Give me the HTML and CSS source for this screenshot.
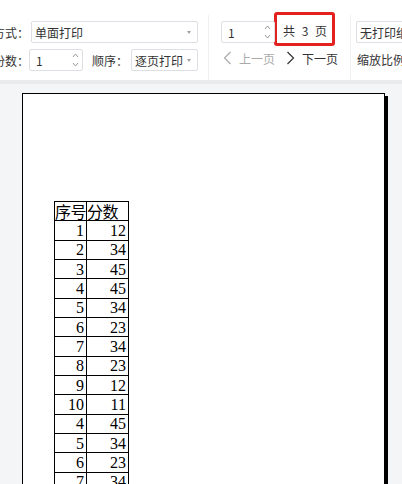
FILE: index.html
```html
<!DOCTYPE html>
<html lang="zh">
<head>
<meta charset="utf-8">
<title>打印预览</title>
<link rel="stylesheet" href="styles.css">
</head>
<body>
<div class="toolbar">
  <div class="group g1">
    <div class="row">
      <span class="label">打印方式：</span>
      <div class="field select wide"><span>单面打印</span><i class="caret"></i></div>
    </div>
    <div class="row">
      <span class="label">份数：</span>
      <div class="field spinner"><span>1</span>
        <svg class="arrows" width="7" height="16" viewBox="0 0 7 16"><path d="M1 5 L3.5 2 L6 5" fill="none" stroke="#9a9a9a" stroke-width="1"/><path d="M1 11 L3.5 14 L6 11" fill="none" stroke="#9a9a9a" stroke-width="1"/></svg>
      </div>
      <span class="label2">顺序：</span>
      <div class="field select narrow"><span>逐页打印</span><i class="caret"></i></div>
    </div>
  </div>
  <div class="divider"></div>
  <div class="group g2">
    <div class="row">
      <div class="field spinner"><span>1</span>
        <svg class="arrows" width="7" height="16" viewBox="0 0 7 16"><path d="M1 5 L3.5 2 L6 5" fill="none" stroke="#9a9a9a" stroke-width="1"/><path d="M1 11 L3.5 14 L6 11" fill="none" stroke="#9a9a9a" stroke-width="1"/></svg>
      </div>
      <span class="total">共 3 页</span>
    </div>
    <div class="row pager">
      <span class="nav disabled"><svg width="9" height="14" viewBox="0 0 9 14"><path d="M7.5 1 L1.5 7 L7.5 13" fill="none" stroke="currentColor" stroke-width="1.2"/></svg>上一页</span>
      <span class="nav"><svg width="9" height="14" viewBox="0 0 9 14"><path d="M1.5 1 L7.5 7 L1.5 13" fill="none" stroke="currentColor" stroke-width="1.2"/></svg>下一页</span>
    </div>
  </div>
  <div class="divider d2"></div>
  <div class="group g3">
    <div class="row">
      <div class="field cut"><span>无打印纸边距</span></div>
    </div>
    <div class="row">
      <span class="plain">缩放比例</span>
    </div>
  </div>
</div>
<div class="workspace">
  <div class="paper">
    <table class="sheet">
      <colgroup><col class="c1"><col class="c2"></colgroup>
      <thead><tr><th>序号</th><th>分数</th></tr></thead>
      <tbody>
        <tr><td>1</td><td>12</td></tr>
        <tr><td>2</td><td>34</td></tr>
        <tr><td>3</td><td>45</td></tr>
        <tr><td>4</td><td>45</td></tr>
        <tr><td>5</td><td>34</td></tr>
        <tr><td>6</td><td>23</td></tr>
        <tr><td>7</td><td>34</td></tr>
        <tr><td>8</td><td>23</td></tr>
        <tr><td>9</td><td>12</td></tr>
        <tr><td>10</td><td>11</td></tr>
        <tr><td>4</td><td>45</td></tr>
        <tr><td>5</td><td>34</td></tr>
        <tr><td>6</td><td>23</td></tr>
        <tr><td>7</td><td>34</td></tr>
        <tr><td>8</td><td>23</td></tr>
        <tr><td>9</td><td>12</td></tr>
      </tbody>
    </table>
  </div>
</div>
</body>
</html>
```

FILE: styles.css
```css
html, body {
  margin: 0;
  padding: 0;
}
body {
  width: 402px;
  height: 484px;
  overflow: hidden;
  background: #f4f5f7;
  font-family: "Noto Sans CJK SC", "Microsoft YaHei", sans-serif;
  font-size: 12px;
  color: #333;
}
.toolbar {
  display: flex;
  height: 80px;
  box-sizing: border-box;
  padding-top: 21px;
  background: #fff;
  white-space: nowrap;
  overflow: hidden;
}
.group {
  display: flex;
  flex-direction: column;
  gap: 6px;
  flex: none;
}
.row {
  display: flex;
  align-items: center;
  height: 22px;
}
.g1 {
  margin-left: -41px;
}
.label {
  width: 70px;
  text-align: right;
  flex: none;
}
.label2 {
  margin-left: 9px;
  width: 39px;
  flex: none;
}
.field {
  box-sizing: border-box;
  height: 22px;
  border: 1px solid #dcdfe3;
  border-radius: 2px;
  background: #fff;
  display: flex;
  align-items: center;
  padding-left: 3px;
  position: relative;
  flex: none;
}
.select.wide {
  width: 167px;
  margin-left: 2px;
}
.select.narrow {
  width: 67px;
}
.caret {
  position: absolute;
  right: 6px;
  top: 9px;
  width: 0;
  height: 0;
  border-left: 2.5px solid transparent;
  border-right: 2.5px solid transparent;
  border-top: 3px solid #a0a0a0;
}
.spinner {
  width: 54px;
  padding-left: 6px;
}
.arrows {
  position: absolute;
  right: 3px;
  top: 2px;
}
.divider {
  width: 1px;
  margin-left: 10px;
  margin-top: -6px;
  height: 65px;
  background: #f0f1f3;
  flex: none;
}
.g2 {
  padding-left: 12px;
}
.total {
  align-self: flex-start;
  box-sizing: border-box;
  margin-top: -9px;
  margin-left: -1px;
  height: 34px;
  width: 61px;
  border: 3px solid #e3211f;
  border-radius: 3px;
  display: flex;
  align-items: center;
  padding-top: 3px;
  padding-left: 6px;
  word-spacing: 4px;
}
.pager {
  margin-top: -2px;
}
.nav {
  display: flex;
  align-items: center;
  gap: 7px;
  color: #333;
}
.nav.disabled {
  color: #aaa;
  margin-left: 2px;
  margin-right: 11px;
}
.d2 {
  margin-left: 12px;
}
.g3 {
  padding-left: 5px;
}
.field.cut {
  width: 80px;
  padding-left: 3px;
}
.plain {
  padding-left: 1px;
  margin-top: -2px;
}
.workspace {
  border-top: 4px solid #eaebed;
  padding: 9px 0 0 22px;
}
.paper {
  box-sizing: border-box;
  width: 363px;
  height: 700px;
  background: #fff;
  border: 1px solid #000;
  box-shadow: 3px 3px 0 #000;
  padding: 107px 0 0 31px;
}
.sheet {
  border-collapse: collapse;
  table-layout: fixed;
  width: 74px;
  font-family: "Liberation Serif", "Noto Sans CJK SC", serif;
  font-size: 16px;
  color: #000;
}
.c1 {
  width: 32px;
}
.c2 {
  width: 42px;
}
.sheet th,
.sheet td {
  border: 1px solid #000;
  padding: 0 2px 0 0;
  height: 19.33px;
  line-height: 17px;
  box-sizing: border-box;
}
.sheet th {
  font-weight: normal;
  text-align: left;
  padding: 0;
  font-family: "Noto Sans CJK SC", sans-serif;
  letter-spacing: -0.5px;
}
.sheet td {
  text-align: right;
}
```
